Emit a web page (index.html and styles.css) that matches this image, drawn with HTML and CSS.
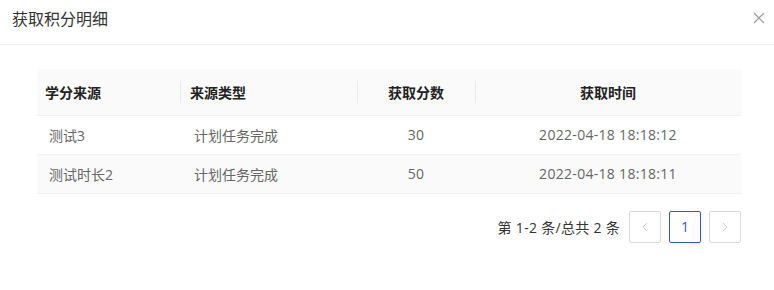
FILE: index.html
```html
<!DOCTYPE html>
<html lang="zh-CN">
<head>
    <meta charset="UTF-8">
    <title>获取积分明细</title>
    <link rel="stylesheet" href="styles.css">
</head>
<body>
    <div class="modal">
        <div class="modal-header">
            <span class="modal-title">获取积分明细</span>
            <span class="modal-close">
                <svg width="12" height="12" viewBox="0 0 12 12">
                    <path d="M1 1L11 11M11 1L1 11" stroke="#999" stroke-width="1.2" fill="none"/>
                </svg>
            </span>
        </div>

        <div class="modal-body">
            <table class="score-table">
                <thead>
                    <tr>
                        <th class="col-source">学分来源</th>
                        <th class="col-type">来源类型</th>
                        <th class="col-score center">获取分数</th>
                        <th class="col-time center">获取时间</th>
                    </tr>
                </thead>
                <tbody>
                    <tr>
                        <td>测试3</td>
                        <td>计划任务完成</td>
                        <td class="center num">30</td>
                        <td class="center num">2022-04-18 18:18:12</td>
                    </tr>
                    <tr class="striped">
                        <td>测试时长2</td>
                        <td>计划任务完成</td>
                        <td class="center num">50</td>
                        <td class="center num">2022-04-18 18:18:11</td>
                    </tr>
                </tbody>
            </table>

            <div class="pagination">
                <span class="total">第 1-2 条/总共 2 条</span>
                <span class="page-btn disabled">
                    <svg width="10" height="10" viewBox="0 0 10 10"><path d="M7 1L3 5L7 9" stroke="#ccc" stroke-width="1" fill="none"/></svg>
                </span>
                <span class="page-btn active">1</span>
                <span class="page-btn disabled">
                    <svg width="10" height="10" viewBox="0 0 10 10"><path d="M3 1L7 5L3 9" stroke="#ccc" stroke-width="1" fill="none"/></svg>
                </span>
            </div>
        </div>
    </div>
</body>
</html>
```

FILE: styles.css
```css
body {
    margin: 0;
    background: #fff;
    font-family: "Open Sans", "Noto Sans CJK SC", sans-serif;
    font-size: 14px;
    color: #333;
}

.modal-header {
    height: 45px;
    display: flex;
    align-items: center;
    justify-content: space-between;
    padding: 0 8px 0 12px;
    border-bottom: 1px solid #eee;
    box-sizing: border-box;
}

.modal-title {
    font-size: 16px;
    color: #333;
    margin-top: -8px;
}

.modal-close {
    display: flex;
    width: 12px;
    margin-right: 1px;
    margin-top: -9px;
}

.modal-body {
    padding: 24px 33px 0 37px;
}

.score-table {
    width: 704px;
    border-collapse: collapse;
    table-layout: fixed;
}

.score-table th,
.score-table td {
    box-sizing: border-box;
}

.col-source { width: 143px; }
.col-type { width: 177px; }
.col-score { width: 118px; }

.score-table th {
    height: 46px;
    padding: 0 8px;
    background: #fafafa;
    font-weight: bold;
    color: #222;
    text-align: left;
    border-bottom: 1px solid #f0f0f0;
    position: relative;
}

.score-table th.col-type {
    padding-left: 10px;
}

.score-table th + th::before {
    content: "";
    position: absolute;
    left: 0;
    top: 12px;
    height: 22px;
    width: 1px;
    background: #eaeaea;
}

.score-table td {
    height: 39px;
    padding: 0 12px;
    color: #666;
    border-bottom: 1px solid #f0f0f0;
}

.score-table td:nth-child(2) {
    padding-left: 14px;
}

.score-table th.center, .score-table td.center {
    text-align: center;
}

.score-table td.num {
    letter-spacing: 0.3px;
}

.striped td {
    background: #fafafa;
}

.pagination {
    display: flex;
    justify-content: flex-end;
    align-items: center;
    gap: 8px;
    margin-top: 17px;
}

.total {
    color: #333;
    margin-right: 1px;
    letter-spacing: 0.3px;
}

.page-btn {
    width: 32px;
    height: 32px;
    box-sizing: border-box;
    border: 1px solid #d9d9d9;
    border-radius: 2px;
    display: flex;
    align-items: center;
    justify-content: center;
    color: #2f54eb;
}

.page-btn.active {
    border-color: #2f54eb;
}
```
